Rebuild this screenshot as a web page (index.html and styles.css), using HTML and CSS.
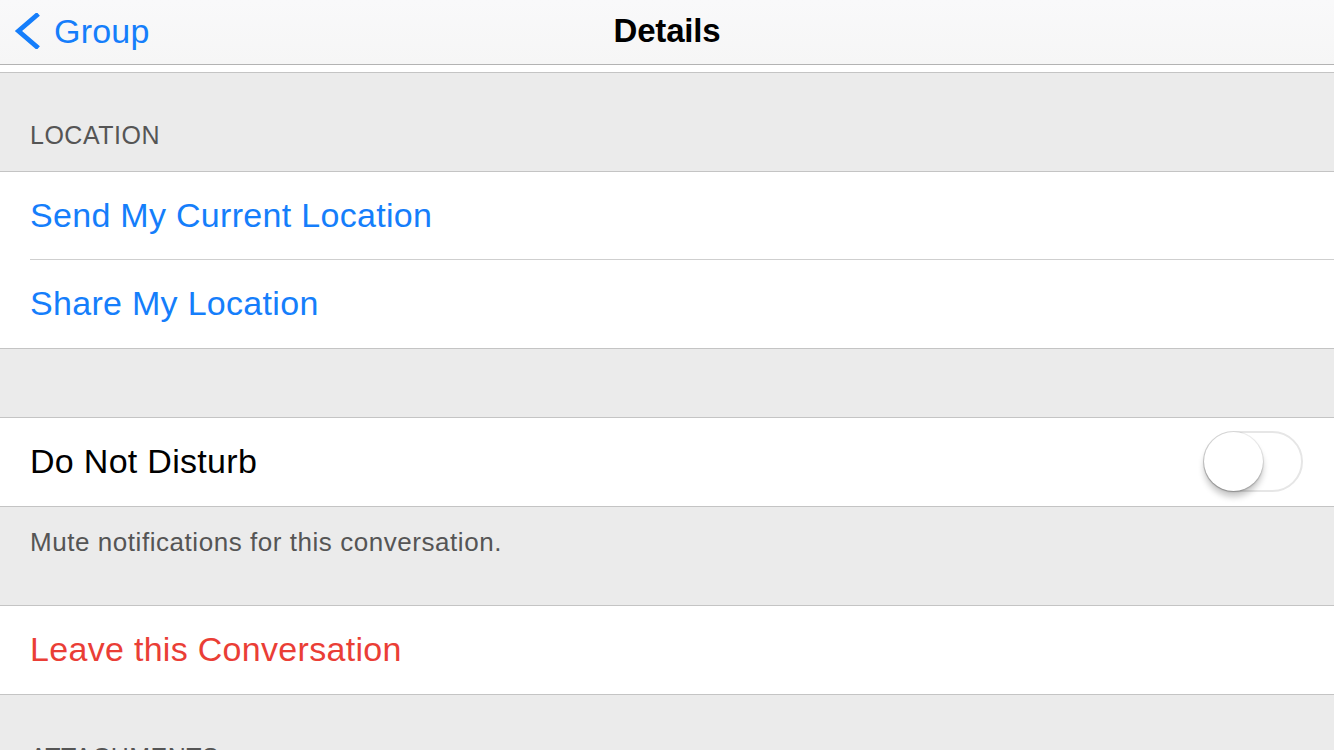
FILE: index.html
```html
<!DOCTYPE html>
<html>
<head>
<meta charset="utf-8">
<title>Details</title>
<link rel="stylesheet" href="styles.css">
</head>
<body>
<div class="screen">
  <header class="nav">
    <a class="back" href="#">
      <svg class="chevron" width="30" height="36" viewBox="0 0 30 36">
        <path d="M24.5 2.5 L6.5 18 L24.5 33.5" fill="none" stroke="#157efb" stroke-width="4.8" stroke-linecap="square"/>
      </svg>
      <span>Group</span>
    </a>
    <h1 class="title">Details</h1>
  </header>
  <div class="nav-gap"></div>

  <div class="section-header">LOCATION</div>
  <ul class="group">
    <li class="cell action">Send My Current Location</li>
    <li class="cell action">Share My Location</li>
  </ul>

  <div class="spacer"></div>
  <ul class="group">
    <li class="cell switch-cell">
      <span>Do Not Disturb</span>
      <span class="switch"><span class="knob"></span></span>
    </li>
  </ul>
  <div class="section-footer">Mute notifications for this conversation.</div>

  <ul class="group">
    <li class="cell destructive">Leave this Conversation</li>
  </ul>

  <div class="section-header">ATTACHMENTS</div>
</div>
</body>
</html>
```

FILE: styles.css
```css
* { box-sizing: border-box; }

html, body {
  margin: 0;
  padding: 0;
}

body {
  font-family: "Liberation Sans", Arial, sans-serif;
  background: #ebebeb;
  color: #000;
}

.screen {
  width: 1334px;
  height: 750px;
  overflow: hidden;
  display: flex;
  flex-direction: column;
  background: #ebebeb;
}

/* navigation bar */
.nav {
  position: relative;
  flex: none;
  height: 65px;
  background: linear-gradient(#f9f9fa, #f6f6f6);
  border-bottom: 1px solid #b3b3b3;
  display: flex;
  align-items: center;
  justify-content: center;
}

.back {
  position: absolute;
  left: 12px;
  top: 0;
  height: 64px;
  display: flex;
  align-items: center;
  gap: 12px;
  color: #157efb;
  text-decoration: none;
  font-size: 34px;
  letter-spacing: 0.2px;
}

.back .chevron {
  display: block;
  margin-top: -3px;
}

.back span {
  margin-top: -2px;
}

.title {
  margin: 0;
  font-size: 33px;
  font-weight: bold;
  letter-spacing: -0.2px;
  margin-top: -3px;
}

.nav-gap {
  flex: none;
  height: 8px;
  background: #fff;
  border-bottom: 1px solid #c4c4c4;
}

/* table sections */
.section-header {
  flex: none;
  height: 99px;
  padding: 48px 0 0 30px;
  font-size: 25px;
  color: #555;
  border-bottom: 1px solid #c4c4c4;
  letter-spacing: 0.5px;
}

.section-footer {
  flex: none;
  height: 99px;
  padding: 20px 0 0 30px;
  font-size: 26px;
  color: #555;
  letter-spacing: 0.55px;
  border-bottom: 1px solid #c4c4c4;
}

.spacer {
  flex: none;
  height: 69px;
  border-bottom: 1px solid #c4c4c4;
}

.group {
  flex: none;
  list-style: none;
  margin: 0;
  padding: 0 0 0 30px;
  background: #fff;
  border-bottom: 1px solid #c4c4c4;
}

.cell {
  height: 88px;
  display: flex;
  align-items: center;
  font-size: 34px;
  letter-spacing: 0.3px;
  border-bottom: 1px solid #cfcfcf;
  padding-bottom: 1px;
}

.cell:last-child {
  border-bottom: none;
  height: 88px;
}

.action { color: #157efb; }
.destructive { color: #ea3e36; }

.switch-cell {
  justify-content: space-between;
  padding-right: 31px;
}

.switch {
  position: relative;
  width: 100px;
  height: 61px;
  border: 2px solid #e6e6e6;
  border-radius: 31px;
  background: #fff;
}

.knob {
  position: absolute;
  left: -1px;
  top: -1px;
  width: 59px;
  height: 59px;
  border-radius: 50%;
  background: #fff;
  box-shadow: 0 0 0 1px rgba(0,0,0,0.06), 0 6px 6px rgba(0,0,0,0.22), 0 1px 2px rgba(0,0,0,0.2);
}
```
